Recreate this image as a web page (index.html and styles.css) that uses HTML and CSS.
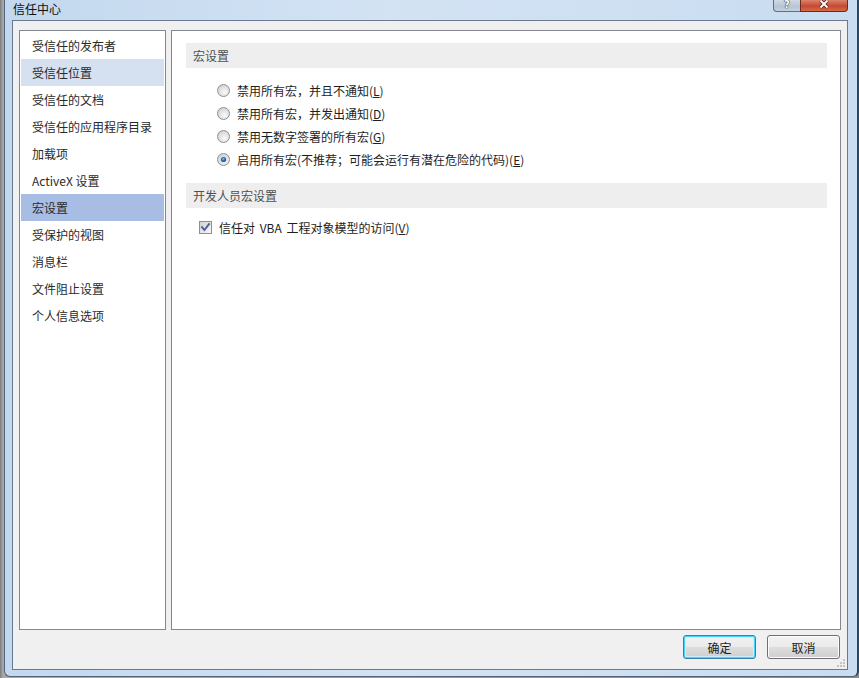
FILE: index.html
```html
<!DOCTYPE html>
<html lang="zh-CN">
<head>
<meta charset="utf-8">
<title>信任中心</title>
<link rel="stylesheet" href="styles.css">
</head>
<body>
<div class="window">
  <div class="titlebar">
    <span class="title">信任中心</span>
    <div class="caption">
      <div class="cap-btn help"><span class="qmark">?</span></div>
      <div class="cap-btn close">
        <svg width="16" height="9" viewBox="0 0 16 9"><path d="M4.5 0.5 L11.5 7.5 M11.5 0.5 L4.5 7.5" stroke="#5a2218" stroke-width="3.4" fill="none"/><path d="M4.5 0.5 L11.5 7.5 M11.5 0.5 L4.5 7.5" stroke="#ffffff" stroke-width="1.8" fill="none"/></svg>
      </div>
    </div>
  </div>
  <div class="client">
    <div class="panels">
      <nav class="nav">
        <div class="nav-item">受信任的发布者</div>
        <div class="nav-item hover">受信任位置</div>
        <div class="nav-item">受信任的文档</div>
        <div class="nav-item">受信任的应用程序目录</div>
        <div class="nav-item">加载项</div>
        <div class="nav-item">ActiveX 设置</div>
        <div class="nav-item selected">宏设置</div>
        <div class="nav-item">受保护的视图</div>
        <div class="nav-item">消息栏</div>
        <div class="nav-item">文件阻止设置</div>
        <div class="nav-item">个人信息选项</div>
      </nav>
      <section class="content">
        <div class="section-head">宏设置</div>
        <div class="options">
          <div class="row"><span class="radio"></span><span>禁用所有宏，并且不通知(<u>L</u>)</span></div>
          <div class="row"><span class="radio"></span><span>禁用所有宏，并发出通知(<u>D</u>)</span></div>
          <div class="row"><span class="radio"></span><span>禁用无数字签署的所有宏(<u>G</u>)</span></div>
          <div class="row"><span class="radio checked"></span><span>启用所有宏(不推荐；可能会运行有潜在危险的代码)(<u>E</u>)</span></div>
        </div>
        <div class="section-head second">开发人员宏设置</div>
        <div class="checks">
          <div class="row"><span class="checkbox"><svg width="11" height="11" viewBox="0 0 11 11"><path d="M2 5.2 L4.4 8 L9 2.2" stroke="#4b5f99" stroke-width="1.9" fill="none" stroke-linecap="square"/></svg></span><span class="wide-space">信任对 VBA 工程对象模型的访问(<u>V</u>)</span></div>
        </div>
      </section>
    </div>
    <div class="footer">
      <button class="btn default">确定</button>
      <button class="btn">取消</button>
    </div>
    <svg class="grip" width="9" height="9" viewBox="0 0 9 9">
      <rect x="6" y="0" width="2" height="2" fill="#c4c4c4"/>
      <rect x="3" y="3" width="2" height="2" fill="#c4c4c4"/>
      <rect x="6" y="3" width="2" height="2" fill="#c4c4c4"/>
      <rect x="0" y="6" width="2" height="2" fill="#c4c4c4"/>
      <rect x="3" y="6" width="2" height="2" fill="#c4c4c4"/>
      <rect x="6" y="6" width="2" height="2" fill="#c4c4c4"/>
    </svg>
  </div>
</div>
</body>
</html>
```
FILE: styles.css
```css
* { box-sizing: border-box; }
html, body { margin: 0; height: 100%; }
body {
  background: linear-gradient(90deg, #7c7c7c, #a9a9a9 3px, #8a8a8a);
  font-family: "Noto Sans CJK SC", "Microsoft YaHei", sans-serif;
  font-size: 12px;
  color: #1e1e1e;
  overflow: hidden;
}
.window {
  margin-left: 4px;
  width: 855px;
  height: 677px;
  background: linear-gradient(90deg, #c3d8ee 0%, #d3e3f4 45%, #c9dcf0 100%);
  border: 1px solid #50667f;
  border-top: none;
  border-right: 2px solid #2c4566;
  border-radius: 0 0 6px 6px;
  padding: 0 9px 0 7px;
  display: flex;
  flex-direction: column;
}
.titlebar {
  height: 20px;
  display: flex;
  justify-content: space-between;
  align-items: flex-start;
}
.title {
  padding-left: 1px;
  padding-top: 1px;
  line-height: 15px;
  font-size: 12px;
  color: #101010;
}
.caption { display: flex; }
.cap-btn {
  height: 12px;
  border: 1px solid #5f6f82;
  border-top: none;
  display: flex;
  justify-content: center;
  align-items: flex-start;
}
.help {
  width: 27px;
  border-right: none;
  border-radius: 0 0 0 4px;
  background: linear-gradient(#cfd9e5, #b7c4d3 60%, #c6d2df);
}
.qmark {
  font-family: "DejaVu Sans", sans-serif;
  font-weight: bold;
  font-size: 10px;
  line-height: 9px;
  color: #ffffff;
  text-shadow: 0 0 1px #3a4350, 0 0 1px #3a4350, 0 0 1px #3a4350;
}
.close {
  width: 48px;
  border-color: #6a2a1f;
  border-radius: 0 0 4px 0;
  background: linear-gradient(#d9836f, #c6492f 55%, #d66a4a);
}
.close svg { display: block; }
.client {
  position: relative;
  height: 650px;
  border: 1px solid #677a8f;
  background: #f0f0f0;
  padding: 9px 6px 0 6px;
  display: flex;
  flex-direction: column;
}
.panels {
  height: 600px;
  display: flex;
  gap: 5px;
}
.nav {
  width: 147px;
  border: 1px solid #828790;
  background: #ffffff;
  padding: 1px;
}
.nav-item {
  height: 27px;
  line-height: 27px;
  padding-left: 11px;
  color: #2a2a2a;
  white-space: nowrap;
}
.nav-item.hover { background: #d5e0f1; }
.nav-item.selected { background: #a7bde3; }
.content {
  flex: 1;
  border: 1px solid #828790;
  background: #ffffff;
  padding: 12px 13px 0 14px;
}
.section-head {
  height: 25px;
  line-height: 25px;
  padding-left: 7px;
  background: #eeeeee;
  color: #4f4f4f;
}
.section-head.second { margin-top: 12px; }
.options {
  margin-top: 11px;
  padding-left: 31px;
}
.row {
  height: 23px;
  display: flex;
  align-items: center;
  gap: 7px;
  white-space: nowrap;
}
.row u { text-underline-offset: 1px; }
.wide-space { word-spacing: 2px; }
.radio {
  position: relative;
  width: 13px;
  height: 13px;
  border-radius: 50%;
  border: 1px solid #8f8f8f;
  background: radial-gradient(circle at 60% 65%, #fbfbfb 0%, #e8e8e8 35%, #c9c9c9 100%);
  flex: none;
}
.radio.checked::after {
  content: "";
  position: absolute;
  left: 3px;
  top: 3px;
  width: 5px;
  height: 5px;
  border-radius: 50%;
  background: radial-gradient(circle at 45% 40%, #8cc6f0 0%, #2663a8 45%, #0b2348 100%);
  box-shadow: 0 0 1px #3c7ac0;
}
.checks {
  margin-top: 8px;
  padding-left: 13px;
}
.checkbox {
  width: 13px;
  height: 13px;
  border: 1px solid #8e8f8f;
  background: linear-gradient(135deg, #d2d2d2, #f7f7f7);
  flex: none;
  display: flex;
  align-items: center;
  justify-content: center;
}
.checkbox svg { display: block; }
.footer {
  margin-top: 5px;
  display: flex;
  justify-content: flex-end;
  gap: 11px;
  padding-right: 1px;
}
.btn {
  width: 73px;
  height: 24px;
  border: 1px solid #707070;
  border-radius: 3px;
  background: linear-gradient(#f2f2f2 0%, #ebebeb 48%, #dddddd 52%, #cfcfcf 100%);
  box-shadow: inset 0 0 0 1px #fcfcfc;
  font-family: "Noto Sans CJK SC", "Microsoft YaHei", sans-serif;
  font-size: 12px;
  color: #1e1e1e;
  padding: 0;
}
.btn.default {
  border-color: #3c7fb1;
  box-shadow: inset 0 0 0 1px #48d1ff, inset 0 0 0 2px #c9eefd;
}
.grip {
  position: absolute;
  right: 1px;
  bottom: 1px;
}
```
